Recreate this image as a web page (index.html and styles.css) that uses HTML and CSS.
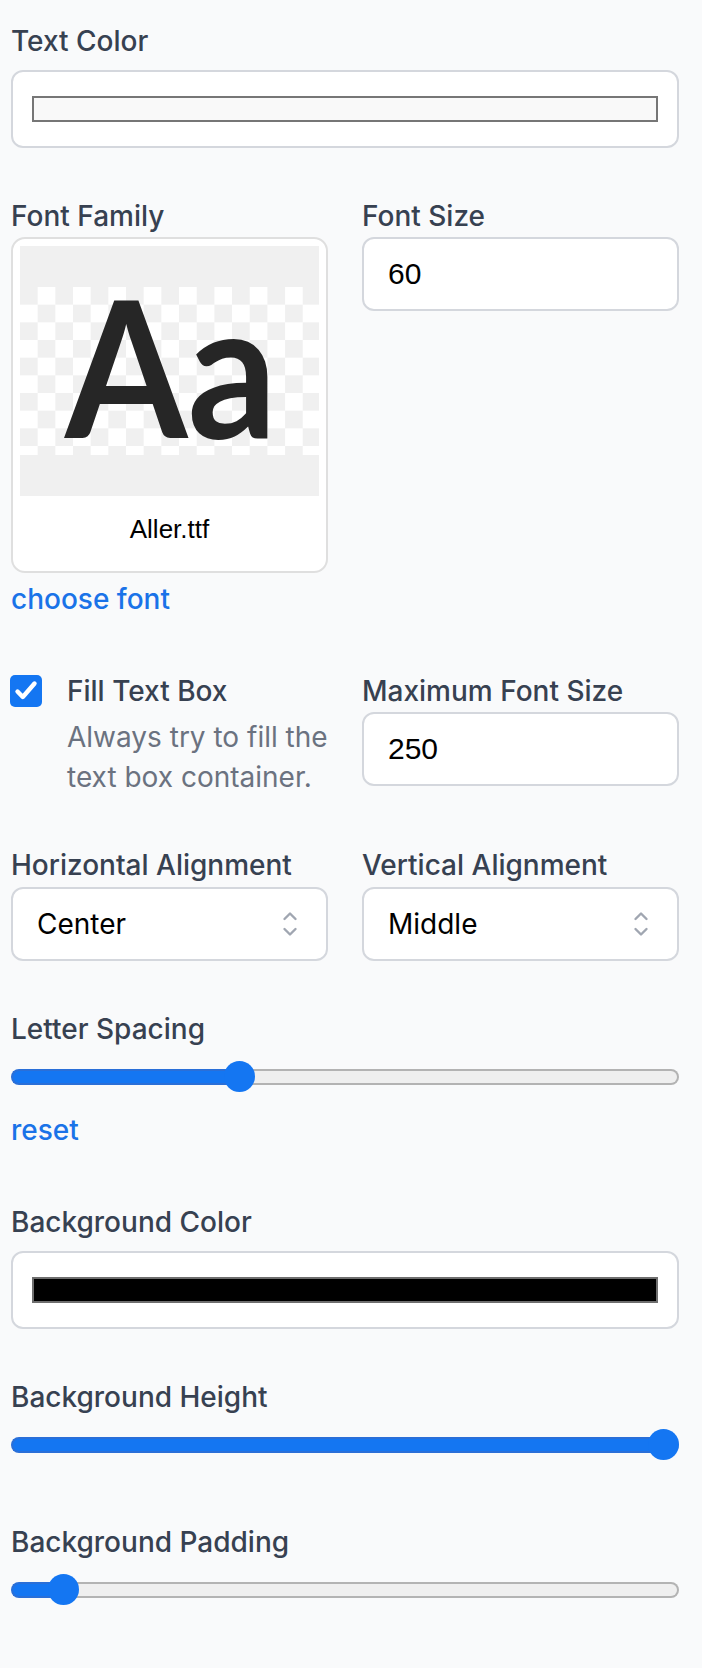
FILE: index.html
```html
<!DOCTYPE html>
<html lang="en">
<head>
<meta charset="utf-8">
<title>Text settings</title>
<link rel="stylesheet" href="styles.css">
</head>
<body>
<div class="panel">

  <div class="field">
    <div class="label">Text Color</div>
    <div class="color-input"><div class="swatch swatch-light"></div></div>
  </div>

  <div class="row">
    <div class="field">
      <div class="label">Font Family</div>
      <div class="font-card">
        <svg class="preview" width="299" height="250" viewBox="0 0 299 250">
          <defs>
            <pattern id="chk" x="0" y="41" width="35.34" height="35.34" patternUnits="userSpaceOnUse">
              <rect width="35.34" height="35.34" fill="#ffffff"/>
              <rect width="17.67" height="17.67" fill="#f0f0f0"/>
              <rect x="17.67" y="17.67" width="17.67" height="17.67" fill="#f0f0f0"/>
            </pattern>
          </defs>
          <rect width="299" height="250" fill="#f0f0f0"/>
          <rect y="41" width="299" height="168" fill="url(#chk)"/>
          <text class="aa" x="45" y="192" textLength="212" lengthAdjust="spacingAndGlyphs">Aa</text>
        </svg>
        <div class="font-name">Aller.ttf</div>
      </div>
      <a class="link link-gap">choose font</a>
    </div>
    <div class="field">
      <div class="label">Font Size</div>
      <div class="text-input">60</div>
    </div>
  </div>

  <div class="row">
    <div class="check-field">
      <div class="checkbox">
        <svg width="32" height="32" viewBox="0 0 32 32"><path d="M7.5 16.5 L12.8 22 L24.5 8.5" fill="none" stroke="#fff" stroke-width="4.4" stroke-linecap="round" stroke-linejoin="round"/></svg>
      </div>
      <div class="check-text">
        <div class="label">Fill Text Box</div>
        <div class="help">Always try to fill the<br>text box container.</div>
      </div>
    </div>
    <div class="field">
      <div class="label">Maximum Font Size</div>
      <div class="text-input">250</div>
    </div>
  </div>

  <div class="row">
    <div class="field">
      <div class="label">Horizontal Alignment</div>
      <div class="select">
        <span>Center</span>
        <svg class="chev" width="16" height="28" viewBox="0 0 16 28"><path d="M2.5 9 L8 3.5 L13.5 9 M2.5 19 L8 24.5 L13.5 19" fill="none" stroke="#a0a6b1" stroke-width="2.4" stroke-linecap="round" stroke-linejoin="round"/></svg>
      </div>
    </div>
    <div class="field">
      <div class="label">Vertical Alignment</div>
      <div class="select">
        <span>Middle</span>
        <svg class="chev" width="16" height="28" viewBox="0 0 16 28"><path d="M2.5 9 L8 3.5 L13.5 9 M2.5 19 L8 24.5 L13.5 19" fill="none" stroke="#a0a6b1" stroke-width="2.4" stroke-linecap="round" stroke-linejoin="round"/></svg>
      </div>
    </div>
  </div>

  <div class="field">
    <div class="label">Letter Spacing</div>
    <div class="slider" style="--p:0.334">
      <div class="track"><div class="fill"></div><div class="rest"></div></div>
      <div class="thumb"></div>
    </div>
    <a class="link reset-gap">reset</a>
  </div>

  <div class="field">
    <div class="label">Background Color</div>
    <div class="color-input"><div class="swatch swatch-dark"></div></div>
  </div>

  <div class="field field-extra">
    <div class="label">Background Height</div>
    <div class="slider" style="--p:1">
      <div class="track"><div class="fill"></div><div class="rest"></div></div>
      <div class="thumb"></div>
    </div>
  </div>

  <div class="field">
    <div class="label">Background Padding</div>
    <div class="slider" style="--p:0.058">
      <div class="track"><div class="fill"></div><div class="rest"></div></div>
      <div class="thumb"></div>
    </div>
  </div>

</div>
</body>
</html>
```

FILE: styles.css
```css
* { box-sizing: border-box; }

body {
  margin: 0;
  background: #f9fafb;
  font-family: Inter, "Noto Sans", sans-serif;
}

.panel {
  display: flex;
  flex-direction: column;
  gap: 48px;
  padding: 21px 23px 40px 11px;
}

.row {
  display: grid;
  grid-template-columns: 317px 317px;
  column-gap: 34px;
}

.field {
  display: flex;
  flex-direction: column;
  align-items: stretch;
}

.field-extra { margin-bottom: 13px; }

.label {
  font-size: 28px;
  line-height: 40px;
  font-weight: 500;
  color: #374151;
}

.color-input {
  margin-top: 9px;
  height: 78px;
  background: #fff;
  border: 2px solid #d4d7dd;
  border-radius: 12px;
  padding: 0 19px;
  display: flex;
  align-items: center;
}

.swatch {
  flex: 1;
  height: 26px;
  border: 2px solid #767676;
}
.swatch-light { background: #f9f9f9; }
.swatch-dark { background: #000; border-color: #6e6e6e; }

.font-card {
  margin-top: 1px;
  background: #fff;
  border: 2px solid #dfdfdf;
  border-radius: 14px;
  padding: 7px 7px 0;
  display: flex;
  flex-direction: column;
}

.preview { display: block; }

.aa {
  font-family: Lato, "Open Sans", sans-serif;
  font-weight: 700;
  font-size: 190px;
  fill: #262626;
}

.font-name {
  padding: 15px 0 24px;
  text-align: center;
  font-family: "Liberation Sans", Arial, sans-serif;
  font-size: 26px;
  line-height: 36px;
  color: #000;
}

.link {
  font-size: 28px;
  line-height: 40px;
  font-weight: 500;
  color: #1a73e8;
  cursor: pointer;
  align-self: flex-start;
}
.link-gap { margin-top: 6px; margin-bottom: 4px; }
.reset-gap { margin-top: 17px; margin-bottom: 4px; }

.text-input {
  margin-top: 1px;
  height: 74px;
  background: #fff;
  border: 2px solid #d4d7dd;
  border-radius: 12px;
  padding: 0 24px;
  display: flex;
  align-items: center;
  font-family: "Liberation Sans", Arial, sans-serif;
  font-size: 30px;
  color: #000;
}

.check-field {
  display: flex;
  gap: 25px;
  margin-left: -1px;
}

.checkbox {
  flex: none;
  width: 32px;
  height: 32px;
  margin-top: 4px;
  border-radius: 5px;
  background: #1476f2;
}
.checkbox svg { display: block; }

.check-text { display: flex; flex-direction: column; }

.help {
  margin-top: 6px;
  font-size: 28px;
  line-height: 40px;
  font-weight: 400;
  color: #6b7280;
  white-space: nowrap;
}

.select {
  margin-top: 2px;
  height: 74px;
  background: #fff;
  border: 2px solid #d4d7dd;
  border-radius: 12px;
  padding: 0 28px 0 24px;
  display: flex;
  align-items: center;
  justify-content: space-between;
  font-size: 28px;
  font-weight: 400;
  color: #000;
}
.chev { display: block; flex: none; }

.slider {
  position: relative;
  margin-top: 12px;
  height: 32px;
  display: flex;
  align-items: center;
}

.track {
  flex: 1;
  height: 16px;
  display: flex;
}

.fill {
  flex: none;
  width: calc(var(--p) * (100% - 31px) + 15.5px);
  background: #1476f2;
  border: 2px solid #2a6fd8;
  border-right: 0;
  border-radius: 8px 0 0 8px;
}

.rest {
  flex: 1;
  min-width: 0;
  background: #efefef;
  border: 2px solid #b3b3b3;
  border-left: 0;
  border-radius: 0 8px 8px 0;
}

.thumb {
  position: absolute;
  top: 0;
  left: calc(var(--p) * (100% - 31px));
  width: 31px;
  height: 31px;
  border-radius: 50%;
  background: #1476f2;
}
```
